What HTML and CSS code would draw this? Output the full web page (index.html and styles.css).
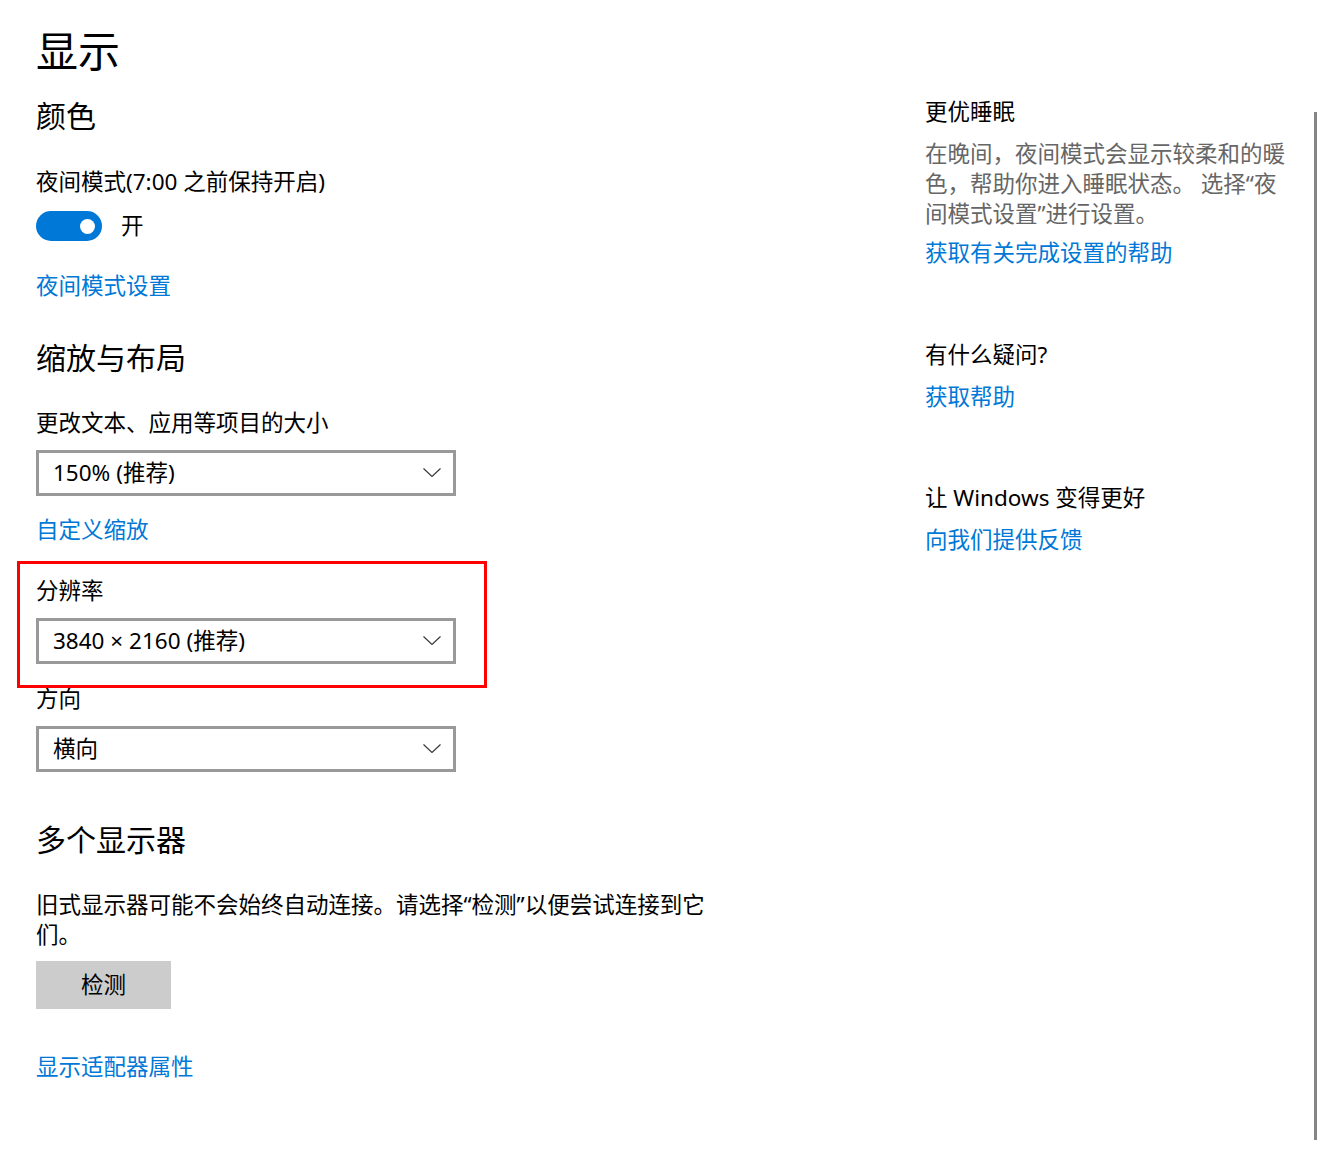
FILE: index.html
```html
<!DOCTYPE html>
<html lang="zh-CN">
<head>
<meta charset="utf-8">
<title>显示</title>
<link rel="stylesheet" href="styles.css">
</head>
<body>
<div class="page">
  <main class="content">
    <h1 class="page-title">显示</h1>

    <h2 class="section-title first">颜色</h2>
    <div class="label night-label">夜间模式(7:00 之前保持开启)</div>
    <div class="toggle-row">
      <span class="toggle"><span class="knob"></span></span>
      <span class="toggle-text">开</span>
    </div>
    <a class="link night-link">夜间模式设置</a>

    <h2 class="section-title scale-title">缩放与布局</h2>
    <div class="label scale-label">更改文本、应用等项目的大小</div>
    <div class="dropdown">
      <span>150% (推荐)</span>
      <svg class="chevron" width="18" height="9" viewBox="0 0 18 9"><polyline points="0.5,0.5 9,8.5 17.5,0.5" fill="none" stroke="#333" stroke-width="1.1"/></svg>
    </div>
    <a class="link custom-link">自定义缩放</a>

    <div class="label res-label">分辨率</div>
    <div class="dropdown">
      <span>3840 × 2160 (推荐)</span>
      <svg class="chevron" width="18" height="9" viewBox="0 0 18 9"><polyline points="0.5,0.5 9,8.5 17.5,0.5" fill="none" stroke="#333" stroke-width="1.1"/></svg>
    </div>

    <div class="label orient-label">方向</div>
    <div class="dropdown">
      <span>横向</span>
      <svg class="chevron" width="18" height="9" viewBox="0 0 18 9"><polyline points="0.5,0.5 9,8.5 17.5,0.5" fill="none" stroke="#333" stroke-width="1.1"/></svg>
    </div>

    <h2 class="section-title multi-title">多个显示器</h2>
    <p class="multi-text">旧式显示器可能不会始终自动连接。请选择“检测”以便尝试连接到它们。</p>
    <button class="detect-btn">检测</button>
    <a class="link adapter-link">显示适配器属性</a>
  </main>

  <aside class="sidebar">
    <div class="side-title sleep-title">更优睡眠</div>
    <p class="side-text">在晚间，夜间模式会显示较柔和的暖色，帮助你进入睡眠状态。 选择“夜间模式设置”进行设置。</p>
    <a class="link side-link help-setup">获取有关完成设置的帮助</a>

    <div class="side-title question-title">有什么疑问?</div>
    <a class="link side-link">获取帮助</a>

    <div class="side-title better-title">让 Windows 变得更好</div>
    <a class="link side-link">向我们提供反馈</a>
  </aside>

  <div class="scrollbar"></div>
  <div class="highlight"></div>
</div>
</body>
</html>
```

FILE: styles.css
```css
* {
  box-sizing: border-box;
}

html, body {
  margin: 0;
  padding: 0;
  background: #ffffff;
}

body {
  font-family: "Noto Sans", "Noto Sans CJK SC", sans-serif;
  font-size: 22.5px;
  line-height: 30px;
  color: #000000;
}

.page {
  position: relative;
  display: grid;
  grid-template-columns: 925px 370px;
  min-height: 1166px;
}

.content {
  display: flex;
  flex-direction: column;
  align-items: flex-start;
  padding-left: 36px;
}

.page-title {
  margin: 23px 0 0;
  font-size: 42px;
  line-height: 56px;
  font-weight: 400;
}

.section-title {
  margin: 0;
  font-size: 30px;
  line-height: 40px;
  font-weight: 400;
}

.section-title.first { margin-top: 17px; }
.section-title.scale-title { margin-top: 37px; }
.section-title.multi-title { margin-top: 48px; }

.label {
  line-height: 30px;
}

.night-label { margin-top: 31px; }
.scale-label { margin-top: 30px; }
.res-label { margin-top: 31px; }
.orient-label { margin-top: 20px; }

.toggle-row {
  display: flex;
  align-items: center;
  margin-top: 14px;
  height: 30px;
}

.toggle {
  position: relative;
  width: 66px;
  height: 30px;
  border-radius: 15px;
  background: #0078d7;
}

.knob {
  position: absolute;
  right: 7px;
  top: 7.5px;
  width: 15px;
  height: 15px;
  border-radius: 50%;
  background: #ffffff;
}

.toggle-text {
  margin-left: 19px;
  line-height: 30px;
}

.link {
  color: #0078d7;
  text-decoration: none;
  line-height: 30px;
  cursor: pointer;
}

.night-link { margin-top: 30px; }
.custom-link { margin-top: 19px; }
.adapter-link { margin-top: 43px; }

.dropdown {
  display: flex;
  align-items: center;
  justify-content: space-between;
  width: 420px;
  height: 46px;
  margin-top: 12px;
  padding: 0 12px 0 14px;
  border: 3px solid #999999;
  line-height: 30px;
}

.chevron {
  display: block;
  margin-top: -1px;
}

.multi-text {
  margin: 30px 0 0;
  width: 675px;
  line-height: 30px;
}

.detect-btn {
  margin-top: 11px;
  width: 135px;
  height: 48px;
  border: none;
  padding: 0;
  background: #cccccc;
  font-family: inherit;
  font-size: 22.5px;
  line-height: 30px;
  color: #000000;
}

.sidebar {
  display: flex;
  flex-direction: column;
  align-items: flex-start;
}

.side-title {
  line-height: 30px;
}

.sleep-title { margin-top: 97px; }
.question-title { margin-top: 72px; }
.better-title { margin-top: 71px; }

.side-text {
  margin: 12px 0 0;
  width: 370px;
  color: #666666;
  line-height: 30px;
}

.side-link { margin-top: 12px; }
.side-link.help-setup { margin-top: 9px; }

.scrollbar {
  position: absolute;
  left: 1314px;
  top: 112px;
  width: 3px;
  height: 1028px;
  background: #858585;
}

.highlight {
  position: absolute;
  left: 17px;
  top: 561px;
  width: 470px;
  height: 127px;
  border: 3px solid #ff0000;
  pointer-events: none;
}
```
